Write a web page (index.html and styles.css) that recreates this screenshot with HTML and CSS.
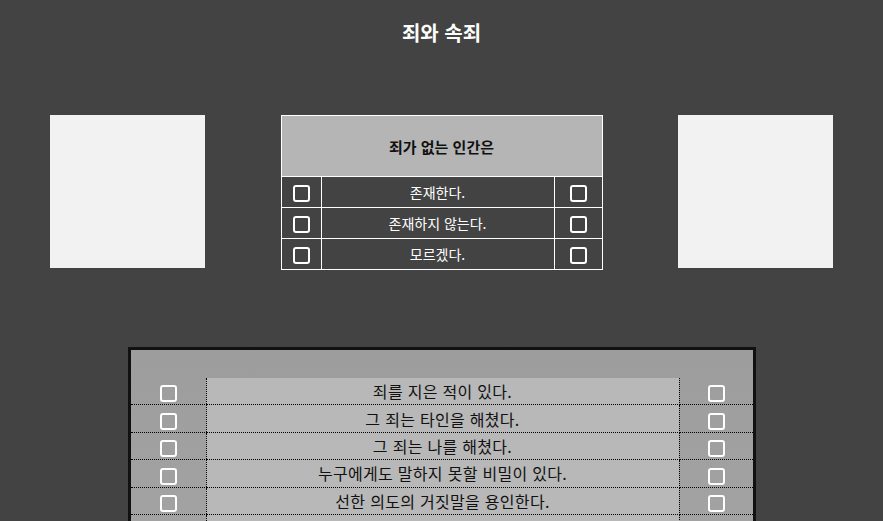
FILE: index.html
```html
<!DOCTYPE html>
<html lang="ko">
<head>
    <meta charset="UTF-8">
    <meta name="viewport" content="width=device-width, initial-scale=1.0">
    <title>죄와 속죄</title>
    <link rel="stylesheet" href="styles.css">
</head>
<body>
    <h1 class="title">죄와 속죄</h1>

    <div class="top-row">
        <div class="photo"></div>

        <table class="survey">
            <tr>
                <th colspan="3">죄가 없는 인간은</th>
            </tr>
            <tr>
                <td class="check-cell"><span class="box"></span></td>
                <td>존재한다.</td>
                <td class="check-cell wide"><span class="box"></span></td>
            </tr>
            <tr>
                <td class="check-cell"><span class="box"></span></td>
                <td>존재하지 않는다.</td>
                <td class="check-cell wide"><span class="box"></span></td>
            </tr>
            <tr>
                <td class="check-cell"><span class="box"></span></td>
                <td>모르겠다.</td>
                <td class="check-cell wide"><span class="box"></span></td>
            </tr>
        </table>

        <div class="photo"></div>
    </div>

    <div class="confession">
        <table class="confession-table">
            <tr>
                <td class="side"><span class="box"></span></td>
                <td class="line">죄를 지은 적이 있다.</td>
                <td class="side"><span class="box"></span></td>
            </tr>
            <tr>
                <td class="side"><span class="box"></span></td>
                <td class="line">그 죄는 타인을 해쳤다.</td>
                <td class="side"><span class="box"></span></td>
            </tr>
            <tr>
                <td class="side"><span class="box"></span></td>
                <td class="line">그 죄는 나를 해쳤다.</td>
                <td class="side"><span class="box"></span></td>
            </tr>
            <tr>
                <td class="side"><span class="box"></span></td>
                <td class="line">누구에게도 말하지 못할 비밀이 있다.</td>
                <td class="side"><span class="box"></span></td>
            </tr>
            <tr>
                <td class="side"><span class="box"></span></td>
                <td class="line">선한 의도의 거짓말을 용인한다.</td>
                <td class="side"><span class="box"></span></td>
            </tr>
            <tr>
                <td class="side"><span class="box"></span></td>
                <td class="line">누군가를 위해 거짓을 말한 적이 있다.</td>
                <td class="side"><span class="box"></span></td>
            </tr>
        </table>
    </div>
</body>
</html>
```

FILE: styles.css
```css
body {
    margin: 0;
    background: #434343;
    font-family: "Noto Sans CJK KR", "Noto Sans", sans-serif;
}

.title {
    margin: 0;
    padding-top: 21px;
    font-size: 20px;
    line-height: 24px;
    font-weight: 700;
    text-align: center;
    color: #fff;
}

.top-row {
    display: flex;
    justify-content: space-between;
    align-items: flex-start;
    padding: 0 50px;
    margin-top: 70px;
}

.photo {
    width: 155px;
    height: 153px;
    background: #f2f2f2;
}

/* Small survey card */
.survey {
    width: 322px;
    border-collapse: collapse;
}

.survey th,
.survey td {
    border: 1px solid #fff;
    padding: 0;
    text-align: center;
}

.survey th {
    height: 60px;
    background: #b5b5b5;
    color: #111;
    font-size: 15px;
    font-weight: 700;
}

.survey td {
    height: 30px;
    color: #fff;
    font-size: 14px;
}

.survey .check-cell {
    width: 39px;
}

.survey .check-cell.wide {
    width: 47px;
}

.box {
    display: inline-block;
    width: 17px;
    height: 17px;
    box-sizing: border-box;
    border: 2px solid #fff;
    border-radius: 3px;
    vertical-align: middle;
}

/* Confession checklist */
.confession {
    width: 628px;
    box-sizing: border-box;
    margin: 77px auto 0;
    border: 3px solid #111;
    padding-top: 28px;
    background: linear-gradient(180deg, #9d9d9d, #a3a3a3);
}

.confession-table {
    width: 100%;
    border-collapse: collapse;
}

.confession-table td {
    height: 26.4px;
    padding: 0;
    text-align: center;
    border-bottom: 1px dotted #000;
}

.confession-table .side {
    width: 75px;
}

.confession-table .side:last-child {
    width: 73px;
}

.confession-table .line {
    background: #b8b8b8;
    border-left: 1px dotted #000;
    border-right: 1px dotted #000;
    color: #111;
    font-size: 16px;
    letter-spacing: 0.3px;
    line-height: 20px;
}
```
